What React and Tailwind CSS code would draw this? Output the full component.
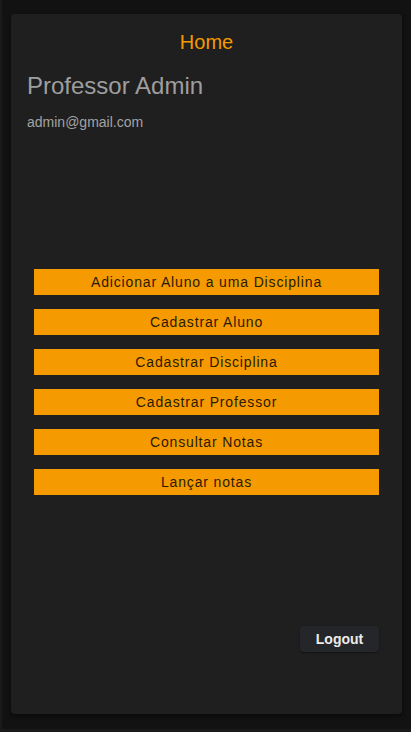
import React from 'react';

const actions = [
  'Adicionar Aluno a uma Disciplina',
  'Cadastrar Aluno',
  'Cadastrar Disciplina',
  'Cadastrar Professor',
  'Consultar Notas',
  'Lançar notas',
];

export default function App() {
  return (
    <div className="h-[732px] w-[411px] bg-[#121212] border-l-2 border-b-[3px] border-[#1a1a1a] px-[9px] pt-[14px] pb-[15px] font-['Liberation_Sans',Arial,sans-serif]">
      <div className="flex h-full flex-col rounded-[4px] bg-[#1f1f1f] shadow-[0_2px_4px_rgba(0,0,0,0.5)] px-4">
        <h1 className="mt-[16px] text-center text-[20px] leading-[24px] text-[#f59a00]">Home</h1>
        <h2 className="mt-[17px] text-[24px] leading-[30px] text-[#9e9e9e]">Professor Admin</h2>
        <p className="mt-[12px] text-[14px] leading-[18px] text-[#a3a3a3]">admin@gmail.com</p>

        <div className="mt-[138px] flex flex-col items-center gap-[14px]">
          {actions.map((label) => (
            <button
              key={label}
              className="h-[26px] w-[345px] bg-[#f59a00] text-[14px] tracking-[0.85px] text-[#2b1b00]"
            >
              {label}
            </button>
          ))}
        </div>

        <div className="mt-[131px] flex justify-end pr-[7px]">
          <button className="h-[26px] w-[79px] rounded-[4px] bg-[#25262a] text-[14px] font-bold text-[#ececec] shadow-[0_1px_2px_rgba(0,0,0,0.4)]">
            Logout
          </button>
        </div>
      </div>
    </div>
  );
}
